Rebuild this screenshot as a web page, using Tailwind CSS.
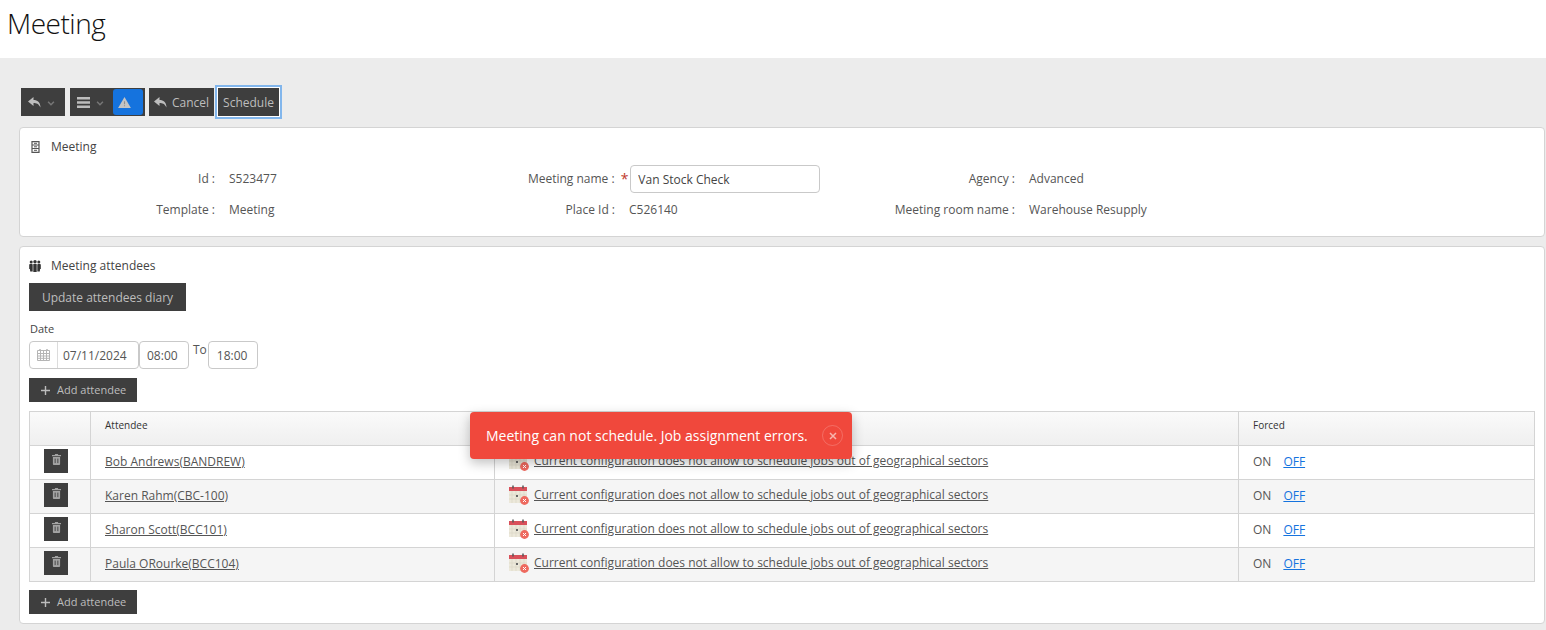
<!DOCTYPE html>
<html lang="en">
<head>
  <meta charset="UTF-8">
  <title>Meeting</title>
  <script src="https://cdn.jsdelivr.net/npm/@tailwindcss/browser@4"></script>
</head>
<body class="bg-[#ececec] font-['Open_Sans',sans-serif] text-[12px] text-[#555] h-[630px] overflow-hidden relative">

  <!-- page title -->
  <div class="bg-white h-[58px] pl-[7px] pt-[1px]">
    <h1 class="text-[28px] leading-[44px] font-light text-[#111] tracking-[-0.5px]">Meeting</h1>
  </div>

  <!-- toolbar -->
  <div class="flex items-center h-[28px] mt-[30px] ml-[21px] text-[#bdbdbd]">
    <div class="bg-[#3e3e3e] w-[44px] h-[28px] flex items-center pl-[7px] gap-[6px]">
      <svg class="w-[13px] h-[11px]" viewBox="0 0 13 11"><path fill="#bdbdbd" d="M5.500 0 0 4.500 5.500 9V6c3 0 5 .6 7 4.500C12.300 5 9.500 3 5.500 3Z"/></svg>
      <svg class="w-[8px] h-[5px] mt-[3px]" viewBox="0 0 9 6"><path fill="none" stroke="#777" stroke-width="1.800" d="M1 1l3.500 3.500L8 1"/></svg>
    </div>
    <div class="bg-[#3e3e3e] w-[75px] h-[28px] flex items-center ml-[5px] pl-[7px]">
      <svg class="w-[13px] h-[11px]" viewBox="0 0 13 11"><path fill="#bdbdbd" d="M0 0h13v2.500H0zM0 4.200h13v2.500H0zM0 8.400h13V11H0z"/></svg>
      <svg class="w-[8px] h-[5px] mt-[3px] ml-[6px]" viewBox="0 0 9 6"><path fill="none" stroke="#777" stroke-width="1.800" d="M1 1l3.500 3.500L8 1"/></svg>
      <div class="ml-[9px] w-[30px] h-[26px] bg-[#1573de] rounded-[3px] flex items-center pl-[5px]">
        <svg class="w-[13px] h-[11px]" viewBox="0 0 14 12"><path fill="#c4c4c4" d="M7 0l7 12H0Z"/><path fill="#8f8f8f" d="M6.400 4.500h1.200v3.500H6.400zM6.400 9h1.200v1.200H6.400z"/></svg>
      </div>
    </div>
    <button class="bg-[#3e3e3e] w-[65px] h-[28px] ml-[4px] flex items-center pl-[5px] gap-[5px] text-[12px]">
      <svg class="w-[13px] h-[11px]" viewBox="0 0 13 11"><path fill="#bdbdbd" d="M5.500 0 0 4.500 5.500 9V6c3 0 5 .6 7 4.500C12.300 5 9.500 3 5.500 3Z"/></svg>
      <span class="pt-[1px]">Cancel</span>
    </button>
    <button class="bg-[#3e3e3e] w-[63px] h-[30px] shrink-0 ml-[3px] pt-[1px] border border-white outline-[2px] outline-[#82b6ec] text-[12px]">Schedule</button>
  </div>

  <!-- meeting details -->
  <section class="bg-white border border-[#d4d4d4] rounded-[4px] ml-[19px] mr-[1px] mt-[11px] h-[110px]">
    <div class="flex items-center h-[36px] pl-[11px] pt-[2px] gap-[11px] text-[#444]">
      <svg class="w-[9px] h-[12px]" viewBox="0 0 9 12"><path fill="none" stroke="#555" stroke-width="1.200" d="M1 .6h7v10.800H1zM1 4h7M1 7.500h7"/><path stroke="#555" d="M3 2.300h3M3 5.800h3M3 9.300h3"/></svg>
      <span>Meeting</span>
    </div>
    <div class="grid grid-cols-[400px_400px_1fr] grid-rows-[31px_31px] items-center mt-[-1px]">
      <div class="flex items-center"><span class="w-[195px] text-right">Id :</span><span class="ml-[14px]">S523477</span></div>
      <div class="flex items-center"><span class="w-[195px] text-right">Meeting name :</span><span class="ml-[6px] text-[#c0392b] text-[14px] leading-none">*</span><input class="ml-[2px] w-[190px] h-[28px] border border-[#c9c9c9] rounded-[4px] px-[7px] text-[#444] mt-[1px]" value="Van Stock Check"></div>
      <div class="flex items-center"><span class="w-[195px] text-right">Agency :</span><span class="ml-[14px]">Advanced</span></div>
      <div class="flex items-center"><span class="w-[195px] text-right">Template :</span><span class="ml-[14px]">Meeting</span></div>
      <div class="flex items-center"><span class="w-[195px] text-right">Place Id :</span><span class="ml-[14px]">C526140</span></div>
      <div class="flex items-center"><span class="w-[195px] text-right">Meeting room name :</span><span class="ml-[14px]">Warehouse Resupply</span></div>
    </div>
  </section>

  <!-- attendees -->
  <section class="bg-white border border-[#d4d4d4] rounded-[4px] ml-[19px] mr-[1px] mt-[9px] h-[378px] px-[9px]">
    <div class="flex items-center h-[36px] pt-[1px] gap-[10px] text-[#444]">
      <svg class="w-[12px] h-[12px]" viewBox="0 0 12 12"><g fill="#333"><circle cx="2.200" cy="2" r="1.500"/><circle cx="6" cy="1.800" r="1.700"/><circle cx="9.800" cy="2" r="1.500"/><path d="M.2 4.500 1 4h2.400l.3 1v6.500H1.200L.9 9H.2zM4.300 4h3.400v8H4.300zM8.600 4H11l.8.5V9h-.7l-.3 2.500H8.300V5z"/></g></svg>
      <span>Meeting attendees</span>
    </div>
    <button class="block bg-[#3e3e3e] text-[#bdbdbd] w-[157px] h-[28px] pt-[1px] text-[12px]">Update attendees diary</button>
    <div class="text-[11px] text-[#444] ml-[1px] mt-[10px] leading-[16px]">Date</div>
    <div class="flex items-start mt-[4px] text-[12px] text-[#555]">
      <div class="flex w-[110px] h-[28px] border border-[#c9c9c9] rounded-[4px]">
        <div class="w-[28px] border-r border-[#dcdcdc] flex items-center justify-center">
          <svg class="w-[13px] h-[12px]" viewBox="0 0 13 12"><path fill="none" stroke="#b5b5b5" d="M.5 1.500h12v10H.5zM.5 4.500h12M.5 7h12M.5 9.300h12M3.500 1.500v10M6.500 1.500v10M9.500 1.500v10"/><path stroke="#b5b5b5" stroke-width="1.500" d="M3 0v2M10 0v2"/></svg>
        </div>
        <span class="pl-[5px] leading-[28px]">07/11/2024</span>
      </div>
      <div class="w-[50px] h-[28px] border border-[#c9c9c9] rounded-[4px] pl-[7px] leading-[28px]">08:00</div>
      <span class="ml-[4px] mr-[1px] leading-[16px] mt-[1px]">To</span>
      <div class="w-[50px] h-[28px] border border-[#c9c9c9] rounded-[4px] pl-[8px] leading-[28px]">18:00</div>
    </div>
    <button class="flex items-center bg-[#3e3e3e] text-[#bdbdbd] w-[108px] h-[24px] mt-[9px] pl-[12px] gap-[7px] text-[11px]">
      <svg class="w-[9px] h-[9px]" viewBox="0 0 9 9"><path fill="#bdbdbd" d="M3.800 0h1.400v3.800H9v1.400H5.200V9H3.800V5.200H0V3.800h3.800z"/></svg>
      Add attendee
    </button>

    <table class="w-[1506px] table-fixed border-collapse mt-[9px] border border-[#d4d4d4]">
      <colgroup><col class="w-[61px]"><col class="w-[404px]"><col class="w-[744px]"><col></colgroup>
      <thead>
        <tr class="h-[34px] bg-gradient-to-b from-[#fafafa] to-[#efefef] text-[10px] text-[#333] text-left">
          <th class="border border-[#d4d4d4] font-normal"></th>
          <th class="border border-[#d4d4d4] font-normal pl-[14px] pb-[7px]">Attendee</th>
          <th class="border border-[#d4d4d4] font-normal"></th>
          <th class="border border-[#d4d4d4] font-normal pl-[14px] pb-[7px]">Forced</th>
        </tr>
      </thead>
      <tbody>
        <tr class="h-[34px]">
          <td class="border border-[#d4d4d4]"><button class="flex items-center justify-center ml-[14px] w-[24px] h-[24px] bg-[#3e3e3e] -translate-y-[2px]"><svg class="w-[9px] h-[11px] mb-[2px]" viewBox="0 0 10 12"><path fill="#a3a3a3" d="M3.500 0h3l.5 1h3v1.500H0V1h3zM1 3.200h8V11a1 1 0 0 1-1 1H2a1 1 0 0 1-1-1z"/><path stroke="#3e3e3e" d="M3.500 5v5M6.500 5v5"/></svg></button></td>
          <td class="border border-[#d4d4d4] pl-[14px] pb-[2px]"><a href="#" class="underline">Bob Andrews(BANDREW)</a></td>
          <td class="border border-[#d4d4d4] pl-[14px] pb-[2px]"><div class="flex items-center gap-[5px] -translate-y-[1px]">
            <svg class="w-[20px] h-[20px] shrink-0" viewBox="0 0 20 20"><rect x="0" y="2" width="18" height="16" fill="#ece8da"/><path stroke="#d8d3c2" stroke-width=".6" d="M3 6v12M7 6v12M11 6v12M15 6v12M0 10h18M0 14h18"/><rect x="0" y="2" width="18" height="4" fill="#d9505a"/><path stroke="#555" stroke-width="1.500" d="M4 .5v3M14 .5v3"/><rect x="7" y="10" width="2" height="2" fill="#666"/><circle cx="15.500" cy="15.500" r="4.400" fill="#ee6a5f"/><path stroke="#fff" d="M14 14l3 3M17 14l-3 3"/></svg>
            <a href="#" class="underline">Current configuration does not allow to schedule jobs out of geographical sectors</a></div></td>
          <td class="border border-[#d4d4d4] pl-[14px] pb-[2px]">ON<a href="#" class="underline text-[#1573de] ml-[12px]">OFF</a></td>
        </tr>
        <tr class="h-[34px] bg-[#f5f5f5]">
          <td class="border border-[#d4d4d4]"><button class="flex items-center justify-center ml-[14px] w-[24px] h-[24px] bg-[#3e3e3e] -translate-y-[2px]"><svg class="w-[9px] h-[11px] mb-[2px]" viewBox="0 0 10 12"><path fill="#a3a3a3" d="M3.500 0h3l.5 1h3v1.500H0V1h3zM1 3.200h8V11a1 1 0 0 1-1 1H2a1 1 0 0 1-1-1z"/><path stroke="#3e3e3e" d="M3.500 5v5M6.500 5v5"/></svg></button></td>
          <td class="border border-[#d4d4d4] pl-[14px] pb-[2px]"><a href="#" class="underline">Karen Rahm(CBC-100)</a></td>
          <td class="border border-[#d4d4d4] pl-[14px] pb-[2px]"><div class="flex items-center gap-[5px] -translate-y-[1px]">
            <svg class="w-[20px] h-[20px] shrink-0" viewBox="0 0 20 20"><rect x="0" y="2" width="18" height="16" fill="#ece8da"/><path stroke="#d8d3c2" stroke-width=".6" d="M3 6v12M7 6v12M11 6v12M15 6v12M0 10h18M0 14h18"/><rect x="0" y="2" width="18" height="4" fill="#d9505a"/><path stroke="#555" stroke-width="1.500" d="M4 .5v3M14 .5v3"/><rect x="7" y="10" width="2" height="2" fill="#666"/><circle cx="15.500" cy="15.500" r="4.400" fill="#ee6a5f"/><path stroke="#fff" d="M14 14l3 3M17 14l-3 3"/></svg>
            <a href="#" class="underline">Current configuration does not allow to schedule jobs out of geographical sectors</a></div></td>
          <td class="border border-[#d4d4d4] pl-[14px] pb-[2px]">ON<a href="#" class="underline text-[#1573de] ml-[12px]">OFF</a></td>
        </tr>
        <tr class="h-[34px]">
          <td class="border border-[#d4d4d4]"><button class="flex items-center justify-center ml-[14px] w-[24px] h-[24px] bg-[#3e3e3e] -translate-y-[2px]"><svg class="w-[9px] h-[11px] mb-[2px]" viewBox="0 0 10 12"><path fill="#a3a3a3" d="M3.500 0h3l.5 1h3v1.500H0V1h3zM1 3.200h8V11a1 1 0 0 1-1 1H2a1 1 0 0 1-1-1z"/><path stroke="#3e3e3e" d="M3.500 5v5M6.500 5v5"/></svg></button></td>
          <td class="border border-[#d4d4d4] pl-[14px] pb-[2px]"><a href="#" class="underline">Sharon Scott(BCC101)</a></td>
          <td class="border border-[#d4d4d4] pl-[14px] pb-[2px]"><div class="flex items-center gap-[5px] -translate-y-[1px]">
            <svg class="w-[20px] h-[20px] shrink-0" viewBox="0 0 20 20"><rect x="0" y="2" width="18" height="16" fill="#ece8da"/><path stroke="#d8d3c2" stroke-width=".6" d="M3 6v12M7 6v12M11 6v12M15 6v12M0 10h18M0 14h18"/><rect x="0" y="2" width="18" height="4" fill="#d9505a"/><path stroke="#555" stroke-width="1.500" d="M4 .5v3M14 .5v3"/><rect x="7" y="10" width="2" height="2" fill="#666"/><circle cx="15.500" cy="15.500" r="4.400" fill="#ee6a5f"/><path stroke="#fff" d="M14 14l3 3M17 14l-3 3"/></svg>
            <a href="#" class="underline">Current configuration does not allow to schedule jobs out of geographical sectors</a></div></td>
          <td class="border border-[#d4d4d4] pl-[14px] pb-[2px]">ON<a href="#" class="underline text-[#1573de] ml-[12px]">OFF</a></td>
        </tr>
        <tr class="h-[34px] bg-[#f5f5f5]">
          <td class="border border-[#d4d4d4]"><button class="flex items-center justify-center ml-[14px] w-[24px] h-[24px] bg-[#3e3e3e] -translate-y-[2px]"><svg class="w-[9px] h-[11px] mb-[2px]" viewBox="0 0 10 12"><path fill="#a3a3a3" d="M3.500 0h3l.5 1h3v1.500H0V1h3zM1 3.200h8V11a1 1 0 0 1-1 1H2a1 1 0 0 1-1-1z"/><path stroke="#3e3e3e" d="M3.500 5v5M6.500 5v5"/></svg></button></td>
          <td class="border border-[#d4d4d4] pl-[14px] pb-[2px]"><a href="#" class="underline">Paula ORourke(BCC104)</a></td>
          <td class="border border-[#d4d4d4] pl-[14px] pb-[2px]"><div class="flex items-center gap-[5px] -translate-y-[1px]">
            <svg class="w-[20px] h-[20px] shrink-0" viewBox="0 0 20 20"><rect x="0" y="2" width="18" height="16" fill="#ece8da"/><path stroke="#d8d3c2" stroke-width=".6" d="M3 6v12M7 6v12M11 6v12M15 6v12M0 10h18M0 14h18"/><rect x="0" y="2" width="18" height="4" fill="#d9505a"/><path stroke="#555" stroke-width="1.500" d="M4 .5v3M14 .5v3"/><rect x="7" y="10" width="2" height="2" fill="#666"/><circle cx="15.500" cy="15.500" r="4.400" fill="#ee6a5f"/><path stroke="#fff" d="M14 14l3 3M17 14l-3 3"/></svg>
            <a href="#" class="underline">Current configuration does not allow to schedule jobs out of geographical sectors</a></div></td>
          <td class="border border-[#d4d4d4] pl-[14px] pb-[2px]">ON<a href="#" class="underline text-[#1573de] ml-[12px]">OFF</a></td>
        </tr>
      </tbody>
    </table>

    <button class="flex items-center bg-[#3e3e3e] text-[#bdbdbd] w-[108px] h-[24px] mt-[8px] pl-[12px] gap-[7px] text-[11px]">
      <svg class="w-[9px] h-[9px]" viewBox="0 0 9 9"><path fill="#bdbdbd" d="M3.800 0h1.400v3.800H9v1.400H5.200V9H3.800V5.200H0V3.800h3.800z"/></svg>
      Add attendee
    </button>
  </section>

  <!-- error toast -->
  <div class="absolute left-[470px] top-[412px] w-[382px] h-[47px] bg-[#f0483c] rounded-[4px] shadow-[0_4px_12px_rgba(0,0,0,0.25)] flex items-center pl-[16px] text-white text-[14px]">
    <span>Meeting can not schedule. Job assignment errors.</span>
    <span class="absolute left-[352px] top-[13px] w-[21px] h-[21px] rounded-full border border-white/20 flex items-center justify-center">
      <svg class="w-[8px] h-[8px]" viewBox="0 0 8 8"><path stroke="#f7b5ae" stroke-width="1.500" d="M1 1l6 6M7 1 1 7"/></svg>
    </span>
  </div>

</body>
</html>
